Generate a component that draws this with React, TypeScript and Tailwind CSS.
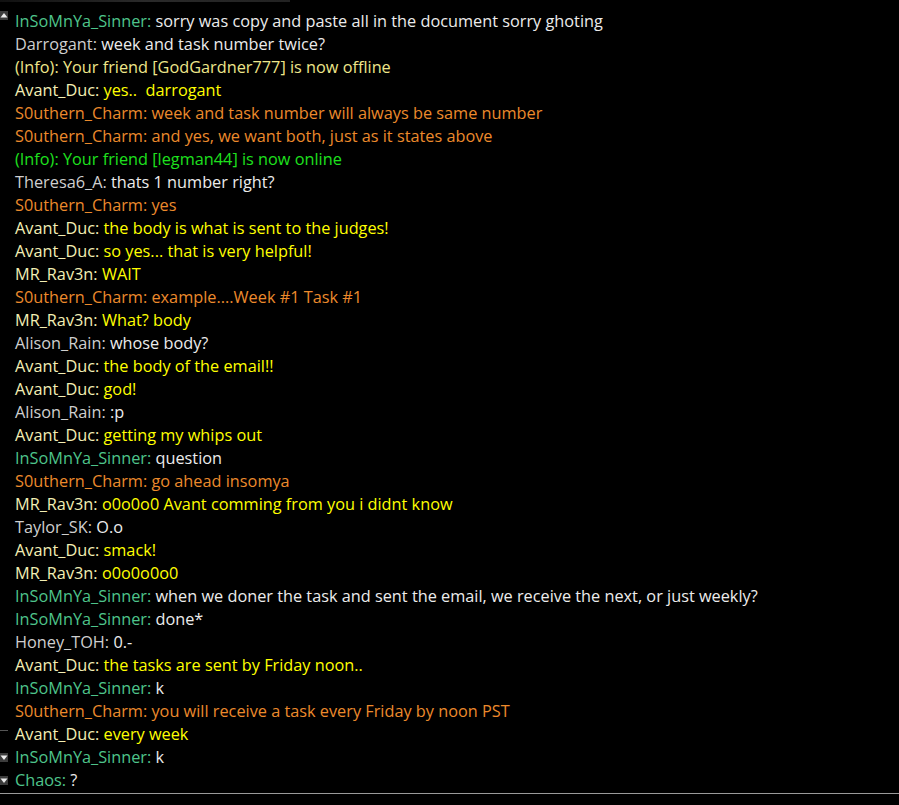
type Line = { name: string; text: string; n: string; t: string };

const G = "text-[#4ec48b]";
const W = "text-[#ececec]";
const GR = "text-[#cfcfcf]";
const PY = "text-[#f3efb4]";
const Y = "text-[#ffff00]";
const O = "text-[#ec8a2c]";
const KH = "text-[#eee68a]";
const LG = "text-[#1ee11e]";

const lines: Line[] = [
  { name: "InSoMnYa_Sinner", text: "sorry was copy and paste all in the document sorry ghoting", n: G, t: W },
  { name: "Darrogant", text: "week and task number twice?", n: GR, t: W },
  { name: "(Info)", text: "Your friend [GodGardner777] is now offline", n: KH, t: KH },
  { name: "Avant_Duc", text: "yes..\u00a0\u00a0darrogant", n: PY, t: Y },
  { name: "S0uthern_Charm", text: "week and task number will always be same number", n: O, t: O },
  { name: "S0uthern_Charm", text: "and yes, we want both, just as it states above", n: O, t: O },
  { name: "(Info)", text: "Your friend [legman44] is now online", n: LG, t: LG },
  { name: "Theresa6_A", text: "thats 1 number right?", n: GR, t: W },
  { name: "S0uthern_Charm", text: "yes", n: O, t: O },
  { name: "Avant_Duc", text: "the body is what is sent to the judges!", n: PY, t: Y },
  { name: "Avant_Duc", text: "so yes... that is very helpful!", n: PY, t: Y },
  { name: "MR_Rav3n", text: "WAIT", n: PY, t: Y },
  { name: "S0uthern_Charm", text: "example....Week #1 Task #1", n: O, t: O },
  { name: "MR_Rav3n", text: "What? body", n: PY, t: Y },
  { name: "Alison_Rain", text: "whose body?", n: GR, t: W },
  { name: "Avant_Duc", text: "the body of the email!!", n: PY, t: Y },
  { name: "Avant_Duc", text: "god!", n: PY, t: Y },
  { name: "Alison_Rain", text: ":p", n: GR, t: W },
  { name: "Avant_Duc", text: "getting my whips out", n: PY, t: Y },
  { name: "InSoMnYa_Sinner", text: "question", n: G, t: W },
  { name: "S0uthern_Charm", text: "go ahead insomya", n: O, t: O },
  { name: "MR_Rav3n", text: "o0o0o0 Avant comming from you i didnt know", n: PY, t: Y },
  { name: "Taylor_SK", text: "O.o", n: GR, t: W },
  { name: "Avant_Duc", text: "smack!", n: PY, t: Y },
  { name: "MR_Rav3n", text: "o0o0o0o0", n: PY, t: Y },
  { name: "InSoMnYa_Sinner", text: "when we doner the task and sent the email, we receive the next, or just weekly?", n: G, t: W },
  { name: "InSoMnYa_Sinner", text: "done*", n: G, t: W },
  { name: "Honey_TOH", text: "0.-", n: GR, t: W },
  { name: "Avant_Duc", text: "the tasks are sent by Friday noon..", n: PY, t: Y },
  { name: "InSoMnYa_Sinner", text: "k", n: G, t: W },
  { name: "S0uthern_Charm", text: "you will receive a task every Friday by noon PST", n: O, t: O },
  { name: "Avant_Duc", text: "every week", n: PY, t: Y },
  { name: "InSoMnYa_Sinner", text: "k", n: G, t: W },
  { name: "Chaos", text: "?", n: G, t: W },
];

function Arrow({ up }: { up?: boolean }) {
  return (
    <svg width="8" height="9" viewBox="0 0 8 9" className="block">
      <rect x="0" y="0" width="8" height="9" fill="#3c3c3c" />
      {up ? (
        <polygon points="0.5,6.5 7.5,6.5 4,2" fill="#ececec" />
      ) : (
        <polygon points="0.5,2.5 7.5,2.5 4,7" fill="#ececec" />
      )}
    </svg>
  );
}

export default function App() {
  return (
    <div className="w-[899px] h-[805px] bg-black overflow-hidden flex flex-col" style={{ fontFamily: '"Open Sans", "Noto Sans", sans-serif' }}>
      <div className="h-[2px] w-[290px] bg-gradient-to-r from-[#111] via-[#2a2a2a] to-[#222]" />
      <div className="flex flex-1 pt-[8px]">
        <div className="w-[15px] flex flex-col">
          <div className="h-[23px] pt-[1px]"><Arrow up /></div>
          <div className="flex-1" />
          <div className="h-[23px] flex items-start"><div className="w-[8px] h-px bg-[#555] mt-[7px]" /></div>
          <div className="h-[23px] flex items-center"><Arrow /></div>
          <div className="h-[23px] flex items-center"><Arrow /></div>
        </div>
        <div className="flex-1 flex flex-col text-[16.3px] leading-[23px]">
          {lines.map((l, i) => (
            <div key={i} className="whitespace-nowrap">
              <span className={l.n}>{l.name}: </span>
              <span className={l.t}>{l.text}</span>
            </div>
          ))}
        </div>
      </div>
      <div className="h-px bg-[#9a9a9a] mt-[1px]" />
      <div className="h-[11px]" />
    </div>
  );
}
